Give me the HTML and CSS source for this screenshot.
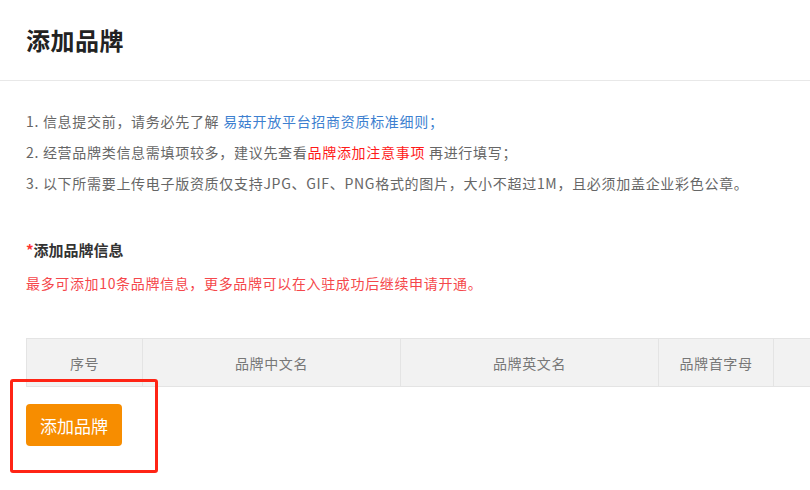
FILE: index.html
```html
<!DOCTYPE html>
<html lang="zh-CN">
<head>
    <meta charset="utf-8">
    <meta name="viewport" content="width=device-width, initial-scale=1.0">
    <title>添加品牌</title>
    <link rel="stylesheet" href="styles.css">
</head>
<body>
    <div class="page-head">
        <h1>添加品牌</h1>
    </div>
    <div class="content">
        <ol class="notes">
            <li>1. 信息提交前，请务必先了解 <a class="link-blue" href="#">易菇开放平台招商资质标准细则；</a></li>
            <li>2. 经营品牌类信息需填项较多，建议先查看<a class="link-red" href="#">品牌添加注意事项</a> 再进行填写；</li>
            <li>3. 以下所需要上传电子版资质仅支持JPG、GIF、PNG格式的图片，大小不超过1M，且必须加盖企业彩色公章。</li>
        </ol>

        <h2 class="section-title"><span class="req">*</span>添加品牌信息</h2>
        <p class="tip">最多可添加10条品牌信息，更多品牌可以在入驻成功后继续申请开通。</p>

        <div class="brand-area">
            <table class="brand-table">
                <thead>
                    <tr>
                        <th class="col-no">序号</th>
                        <th class="col-cn">品牌中文名</th>
                        <th class="col-en">品牌英文名</th>
                        <th class="col-letter">品牌首字母</th>
                        <th class="col-more"></th>
                    </tr>
                </thead>
            </table>
            <button class="add-btn">添加品牌</button>
            <div class="mark-box"></div>
        </div>
    </div>
</body>
</html>
```

FILE: styles.css
```css
body {
    margin: 0;
    font-family: "Noto Sans CJK SC", "Noto Sans", sans-serif;
    color: #666;
    background: #fff;
    min-height: 490px;
}
.page-head {
    height: 81px;
    border-bottom: 1px solid #e8e8e8;
    padding-left: 26px;
    box-sizing: border-box;
}
.page-head h1 {
    margin: 0;
    padding-top: 22px;
    font-size: 24px;
    letter-spacing: 0.5px;
    line-height: 36px;
    font-weight: bold;
    color: #222;
}
.content {
    padding-left: 26px;
    overflow: hidden;
}
.notes {
    list-style: none;
    margin: 0;
    padding: 25px 0 0;
}
.notes li {
    font-size: 14px;
    letter-spacing: 0.7px;
    line-height: 31px;
    height: 31px;
    color: #666;
    white-space: nowrap;
}
.notes a {
    text-decoration: none;
}
.link-blue {
    color: #3d7fd0;
}
.link-red {
    color: #ff1a1a;
}
.section-title {
    margin: 40px 0 0;
    font-size: 15px;
    line-height: 22px;
    font-weight: bold;
    color: #333;
}
.req {
    color: #f33;
}
.tip {
    margin: 12px 0 0;
    font-size: 14px;
    letter-spacing: 0.65px;
    line-height: 20px;
    color: #f5474b;
}
.brand-area {
    position: relative;
    margin-top: 45px;
    padding-bottom: 40px;
}
.brand-table {
    border-collapse: collapse;
    table-layout: fixed;
    width: 820px;
}
.brand-table th {
    height: 47px;
    background: #f2f2f2;
    border: 1px solid #e4e4e4;
    font-size: 14px;
    letter-spacing: 0.6px;
    font-weight: normal;
    color: #777;
    padding: 0;
}
.col-no { width: 115px; }
.col-cn { width: 257px; }
.col-en { width: 257px; }
.col-letter { width: 114px; }
.add-btn {
    display: block;
    margin-top: 17px;
    width: 96px;
    height: 42px;
    border: none;
    border-radius: 4px;
    background: #f78d00;
    color: #fff;
    font-family: inherit;
    font-size: 17px;
    padding: 0;
}
.mark-box {
    position: absolute;
    left: -16px;
    top: 41px;
    width: 142px;
    height: 88px;
    border: 3px solid #ff2415;
    border-radius: 3px;
}
```
